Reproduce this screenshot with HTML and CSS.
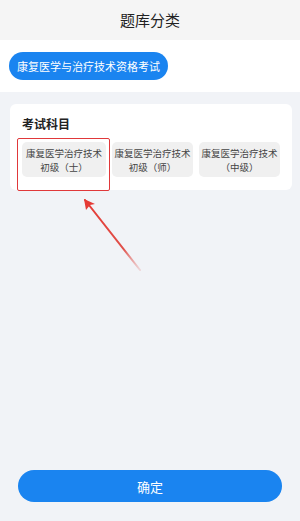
FILE: index.html
```html
<!DOCTYPE html>
<html lang="zh">
<head>
  <meta charset="UTF-8" />
  <title>题库分类</title>
  <meta name="viewport" content="width=device-width, initial-scale=1.0" />
  <link rel="stylesheet" href="styles.css">
</head>
<body>
  <div class="page">
    <div class="header">题库分类</div>

    <div class="exam-bar">
      <button class="exam-pill">康复医学与治疗技术资格考试</button>
    </div>

    <div class="card">
      <div class="card-title">考试科目</div>
      <div class="subjects">
        <div class="subject">康复医学治疗技术<br>初级（士）</div>
        <div class="subject">康复医学治疗技术<br>初级（师）</div>
        <div class="subject">康复医学治疗技术<br>（中级）</div>
      </div>
    </div>

    <div class="spacer"></div>

    <div class="footer">
      <button class="ok-btn">确定</button>
    </div>

    <!-- annotation overlay -->
    <div class="mark-box"></div>
    <svg class="mark-arrow" width="300" height="521" viewBox="0 0 300 521">
      <defs>
        <linearGradient id="fade" x1="85" y1="200" x2="140" y2="270" gradientUnits="userSpaceOnUse">
          <stop offset="0" stop-color="#e53a35"/>
          <stop offset="0.7" stop-color="#e0504a"/>
          <stop offset="1" stop-color="#e8a8a8" stop-opacity="0.4"/>
        </linearGradient>
      </defs>
      <path d="M85 200 L140 270" stroke="url(#fade)" stroke-width="2" stroke-linecap="round"/>
      <path d="M84 199 L86 210 L90 205 L95 204 Z" fill="#e53a35"/>
    </svg>
  </div>
</body>
</html>
```
FILE: styles.css
```css
body {
  margin: 0;
  font-family: "Noto Sans CJK SC", "Noto Sans", sans-serif;
  background-color: #f1f3f7;
}

.page {
  position: relative;
  height: 521px;
  display: flex;
  flex-direction: column;
}

.header {
  height: 40px;
  line-height: 40px;
  text-align: center;
  font-size: 15px;
  color: #222;
  background: #f5f5f5;
}

.exam-bar {
  background: #fff;
  height: 52px;
  padding: 12px 9px 0;
  box-sizing: border-box;
}

.exam-pill {
  height: 28px;
  padding: 0 8px;
  border: none;
  border-radius: 14px;
  background: #1a84f0;
  color: #fff;
  font-family: inherit;
  font-size: 11px;
}

.card {
  margin: 12px 8px 0 10px;
  background: #fff;
  border-radius: 6px;
  padding: 12px 12px 13px 12px;
}

.card-title {
  font-size: 12px;
  font-weight: bold;
  color: #222;
  margin-bottom: 10px;
  line-height: 16px;
}

.subjects {
  display: flex;
  gap: 6px;
}

.subject {
  width: 84px;
  height: 35px;
  box-sizing: border-box;
  background: #f0f0f0;
  border-radius: 5px;
  font-size: 9.5px;
  line-height: 14px;
  color: #444;
  text-align: center;
  padding-top: 4px;
  white-space: nowrap;
}

.subject + .subject {
  width: 81px;
}

.spacer {
  flex: 1;
}

.footer {
  padding: 0 18px 19px;
}

.ok-btn {
  width: 100%;
  height: 32px;
  border: none;
  border-radius: 16px;
  background: #1a84f0;
  color: #fff;
  font-family: inherit;
  font-size: 13px;
}

.mark-box {
  position: absolute;
  left: 17px;
  top: 138px;
  width: 91px;
  height: 51px;
  border: 1.5px solid #e0383a;
  border-radius: 2px;
}

.mark-arrow {
  position: absolute;
  left: 0;
  top: 0;
  pointer-events: none;
}
```
